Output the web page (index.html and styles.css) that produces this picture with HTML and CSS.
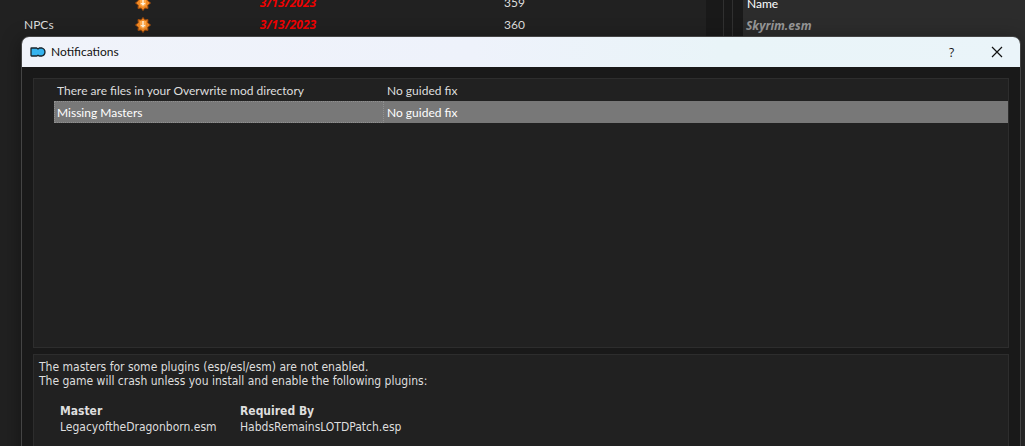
FILE: index.html
```html
<!DOCTYPE html>
<html lang="en">
<head>
<meta charset="utf-8">
<title>Notifications</title>
<link rel="stylesheet" href="styles.css">
</head>
<body>
<svg class="defs" aria-hidden="true">
  <symbol id="burst" viewBox="0 0 16 16">
    <path d="M8 .5 9.800 3 13 2.600 12.700 5.800 15.500 8 12.700 10.200 13 13.400 9.800 13 8 15.500 6.200 13 3 13.400 3.300 10.200 .5 8 3.300 5.800 3 2.600 6.200 3Z" fill="#f08a24" stroke="#a34c0c"/>
    <path d="M5 4h6v6l-3 2-3-2z" fill="#ffa748"/>
    <path d="M7.300 4h1.400v4h2L8 10.800 5.300 8h2z" fill="#fff3dc"/>
  </symbol>
</svg>
<main class="app">
  <section class="mods">
    <table class="mod-table">
      <tbody>
        <tr><td class="mod-name"></td><td class="mod-flag"><svg class="burst"><use href="#burst"/></svg></td><td class="mod-date">3/13/2023</td><td class="mod-priority">359</td></tr>
        <tr><td class="mod-name">NPCs</td><td class="mod-flag"><svg class="burst"><use href="#burst"/></svg></td><td class="mod-date">3/13/2023</td><td class="mod-priority">360</td></tr>
      </tbody>
    </table>
  </section>
  <div class="splitter"></div>
  <section class="plugins">
    <div class="plugin-list">
      <div class="plugin-head">Name</div>
      <div class="plugin-item">Skyrim.esm</div>
    </div>
  </section>
</main>
<div class="dialog" role="dialog" aria-labelledby="dialog-title">
  <header class="titlebar">
    <svg class="logo" viewBox="0 0 16 10" aria-hidden="true"><path d="M1.500 1H6.500L8 2 9.500 1H12Q15 2 15 5T12 9H9.500L8 8.300 6.500 9H1.500Q1 9 1 8.500V1.500Q1 1 1.500 1Z" fill="#35b3ee" stroke="#17252d" stroke-width="1.300"/></svg>
    <h1 class="title" id="dialog-title">Notifications</h1>
    <button class="caption-button" type="button" aria-label="Help">?</button>
    <button class="caption-button" type="button" aria-label="Close"><svg class="close" viewBox="0 0 12 12"><path d="M1 1 11 11M11 1 1 11" stroke="#111" stroke-width="1.200"/></svg></button>
  </header>
  <div class="content">
    <div class="panel problems">
      <table class="problem-table">
        <tbody>
          <tr><td class="problem">There are files in your Overwrite mod directory</td><td class="fix">No guided fix</td></tr>
          <tr class="selected"><td class="problem">Missing Masters</td><td class="fix">No guided fix</td></tr>
        </tbody>
      </table>
    </div>
    <div class="panel details">
      <p class="message">The masters for some plugins (esp/esl/esm) are not enabled.<br>The game will crash unless you install and enable the following plugins:</p>
      <table class="masters">
        <thead><tr><th>Master</th><th>Required By</th></tr></thead>
        <tbody><tr><td>LegacyoftheDragonborn.esm</td><td>HabdsRemainsLOTDPatch.esp</td></tr></tbody>
      </table>
    </div>
  </div>
</div>
</body>
</html>
```
FILE: styles.css
```css
* { box-sizing: border-box; }
body {
  margin: 0;
  height: 100vh;
  overflow: hidden;
  background: #191919;
  color: #dedede;
  font: 12px/22px Lato, "Open Sans", sans-serif;
}
table { border-collapse: collapse; table-layout: fixed; }
td, th { padding: 0; text-align: left; white-space: nowrap; }
.defs { position: absolute; width: 0; height: 0; }

.app {
  display: grid;
  grid-template-columns: 706fr 18px 301fr;
  height: 100vh;
}
.mods, .plugin-list { overflow: hidden; }
.mods { background: #212121; }
.mod-table { width: 100%; margin-top: -8px; }
.mod-name { width: 112px; padding-left: 24px; }
.mod-flag { width: 62px; text-align: center; }
.mod-date {
  width: 228px;
  text-align: center;
  color: #f00000;
  font-family: "Open Sans", sans-serif;
  font-weight: bold;
  font-style: italic;
}
.mod-priority { padding-left: 102px; }
.burst { display: block; width: 16px; height: 16px; margin: auto; }
.splitter { border-right: 1px solid #303030; }
.plugins {
  display: flex;
  margin-left: 8px;
  padding-left: 10px;
  border-left: 1px solid #303030;
}
.plugin-list { flex: 1; padding-left: 3px; background: #2c2c2c; }
.plugin-head { margin-top: -7px; padding-left: 1px; color: #fff; }
.plugin-item {
  color: #989898;
  font-family: "Open Sans", sans-serif;
  font-weight: bold;
  font-style: italic;
}

.dialog {
  position: absolute;
  inset: 36px 4px -20px 21px;
  display: flex;
  flex-direction: column;
  overflow: hidden;
  border: 1px solid #444;
  border-radius: 8px;
  background: #191919;
  box-shadow: 0 4px 20px rgba(0, 0, 0, .4);
}
.titlebar {
  display: flex;
  align-items: center;
  height: 30px;
  padding: 0 1px 0 8px;
  background: linear-gradient(90deg, #f0f3fa, #eef2fb 45%, #e9f4f8 70%, #eaf4f9);
  color: #111;
}
.logo { width: 16px; height: 10px; }
.title { flex: 1; margin: 0 0 0 5px; font-size: 12px; font-weight: normal; }
.caption-button {
  display: grid;
  place-items: center;
  width: 45px;
  height: 30px;
  padding: 0;
  border: 0;
  background: none;
  color: #111;
  font: 12px "Open Sans", sans-serif;
}
.close { width: 12px; height: 12px; }

.content {
  flex: 1;
  display: grid;
  grid-template-rows: 270fr 111fr;
  gap: 6px;
  padding: 11px 11px 0;
}
.panel { border: 1px solid #2d2d2d; background: #212121; }
.problems { padding-left: 20px; }
.problem-table { width: 100%; line-height: 20px; }
.problem-table td { padding: 2px 0 0 3px; }
.problem { width: 330px; }
.selected { background: #787878; color: #fff; }
.selected .problem { outline: 1px dotted #909090; outline-offset: -1px; }
.details {
  padding: 5px;
  font-family: "DejaVu Sans Condensed", "DejaVu Sans", sans-serif;
  line-height: 14px;
}
.message { margin: 0 0 15px; }
.masters { margin-left: 21px; line-height: 16px; }
.masters th:first-child { width: 180px; }
```
